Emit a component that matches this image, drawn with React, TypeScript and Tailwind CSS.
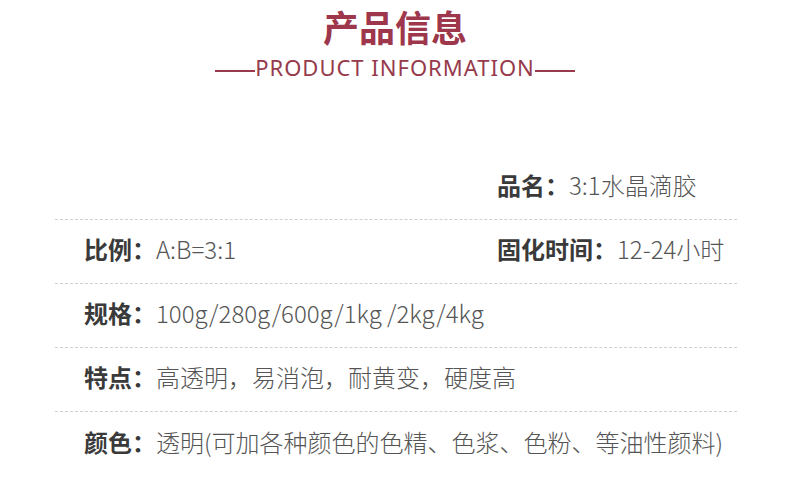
export default function App() {
  const cjk = { fontFamily: '"Noto Sans CJK SC", "Noto Sans", sans-serif' };

  const rows: { left?: [string, string]; right?: [string, string] }[] = [
    { right: ["品名：", "3:1水晶滴胶"] },
    { left: ["比例：", "A:B=3:1"], right: ["固化时间：", "12-24小时"] },
    { left: ["规格：", "100g/280g/600g/1kg /2kg/4kg"] },
    { left: ["特点：", "高透明，易消泡，耐黄变，硬度高"] },
    { left: ["颜色：", "透明(可加各种颜色的色精、色浆、色粉、等油性颜料)"] },
  ];

  const cell = (c?: [string, string]) =>
    c ? (
      <div className="flex items-center whitespace-nowrap text-[24px] leading-none pb-[5px]">
        <span className="font-bold text-[#3a3a3a]">{c[0]}</span>
        <span className="text-[#555555] font-light">{c[1]}</span>
      </div>
    ) : null;

  return (
    <main className="w-[790px] h-[486px] bg-white overflow-hidden" style={cjk}>
      <header className="flex flex-col items-center pt-[4px]">
        <h1 className="text-[36px] leading-[44px] font-bold text-[#9e364c]">产品信息</h1>
        <div className="mt-[6px] flex items-center text-[#963a4c]">
          <span className="h-[2px] w-[40px] bg-[#963a4c] mt-[7px]" />
          <span
            className="text-[22px] leading-[26px] font-normal tracking-[1px]"
            style={{ fontFamily: '"Noto Sans", sans-serif' }}
          >
            PRODUCT INFORMATION
          </span>
          <span className="h-[2px] w-[40px] bg-[#963a4c] mt-[7px]" />
        </div>
      </header>

      <section className="ml-[55px] w-[682px] mt-[76px]">
        {rows.map((r, i) => (
          <div
            key={i}
            className={
              "grid grid-cols-[413px_1fr] items-center h-[64px] pl-[29px] " +
              (i < rows.length - 1 ? "border-b border-dashed border-[#cfcfcf]" : "")
            }
          >
            <div>{cell(r.left)}</div>
            <div>{cell(r.right)}</div>
          </div>
        ))}
      </section>
    </main>
  );
}
